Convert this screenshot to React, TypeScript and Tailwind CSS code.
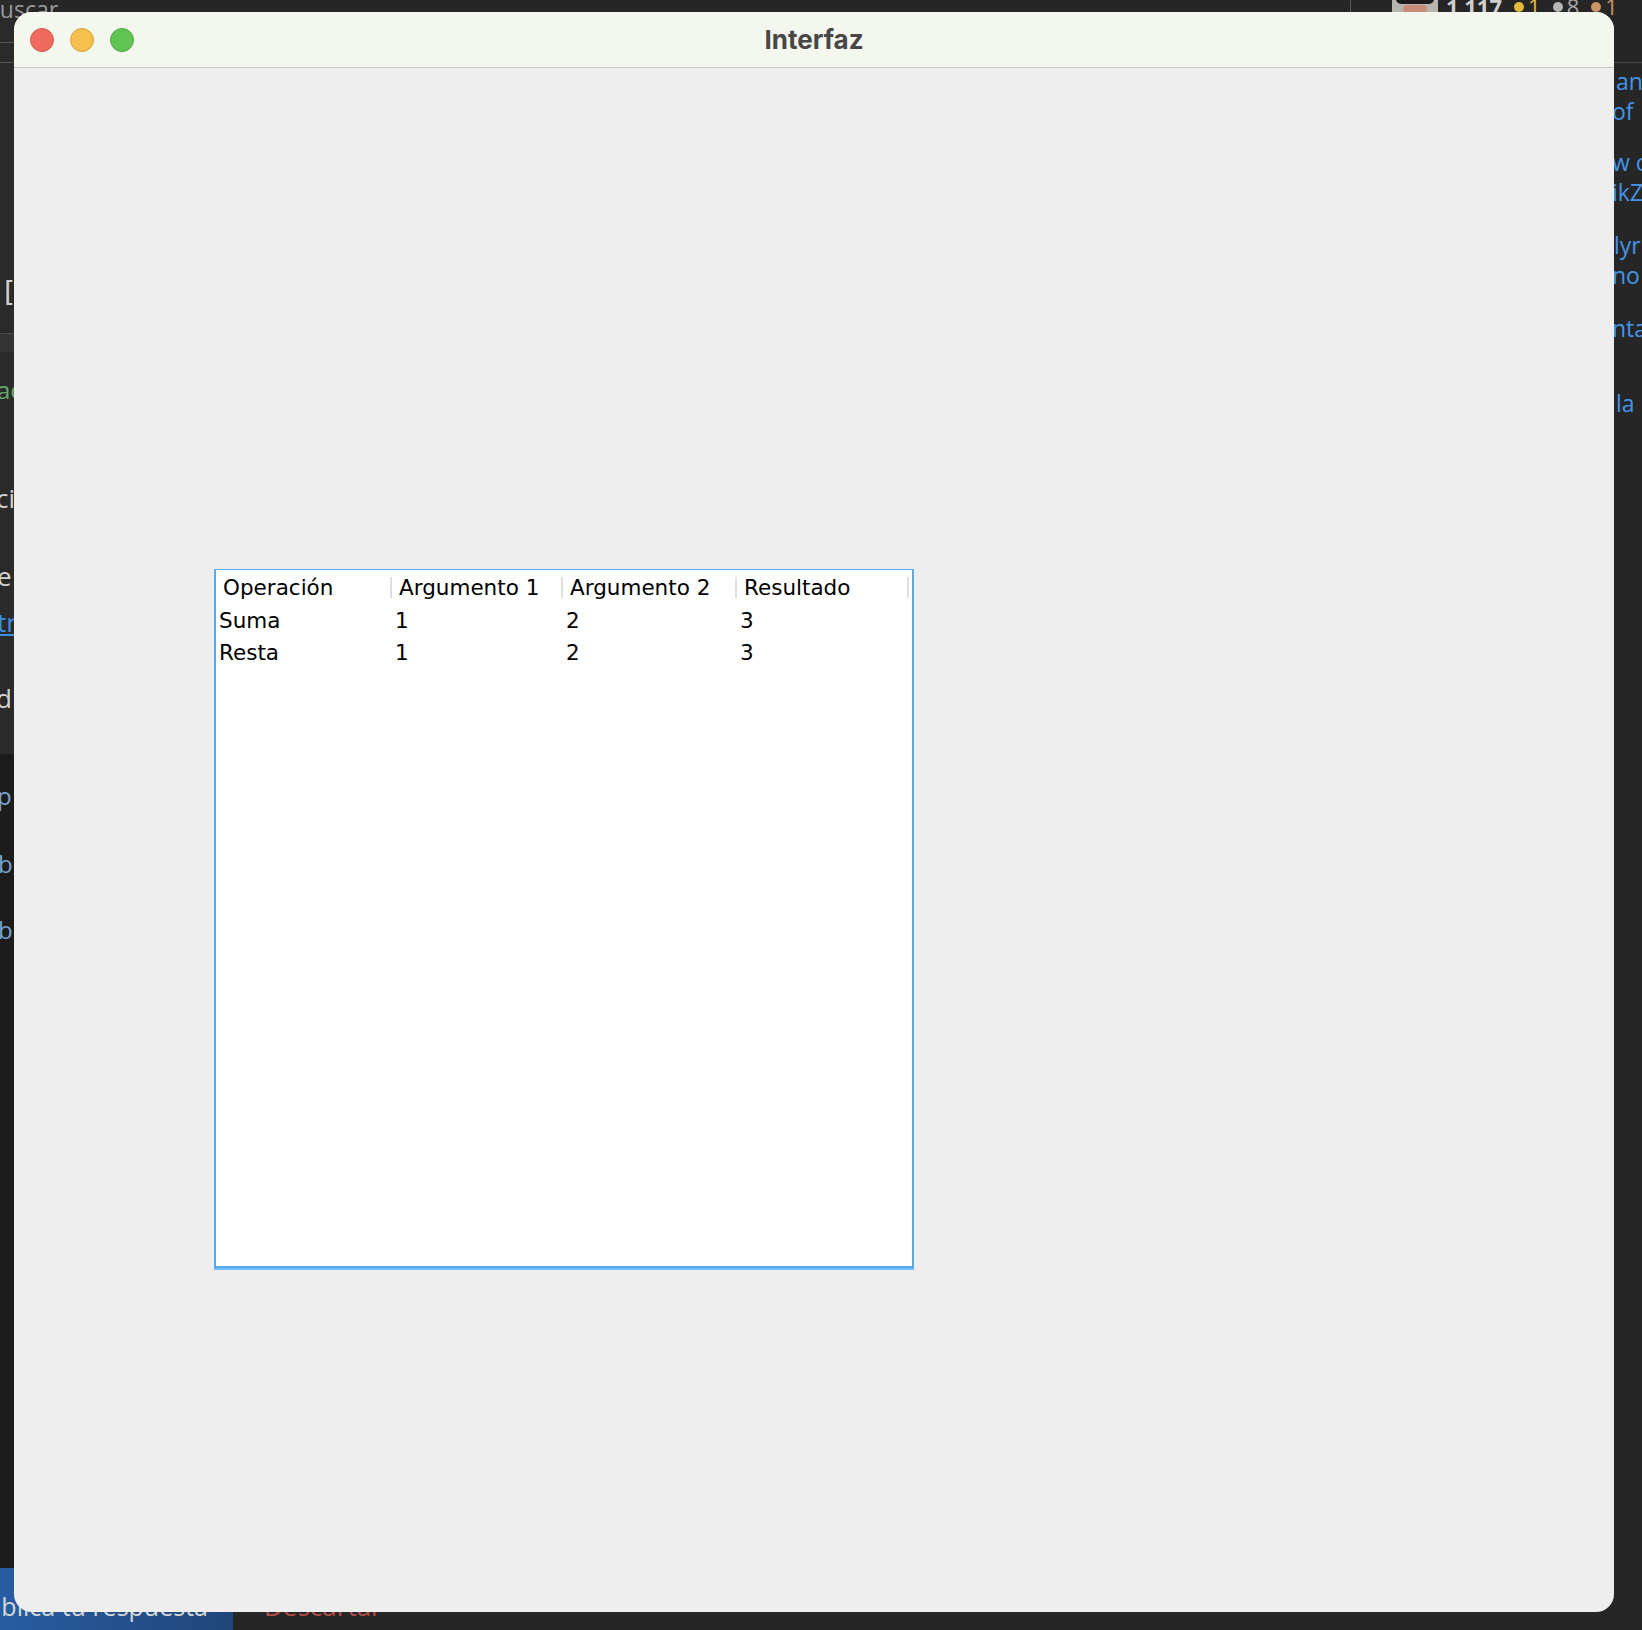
import React from "react";

const columns = ["Operación", "Argumento 1", "Argumento 2", "Resultado"];

const rows = [
  ["Suma", "1", "2", "3"],
  ["Resta", "1", "2", "3"],
];

function TrafficLights() {
  return (
    <div className="flex items-center gap-4 pl-4">
      <span className="block h-6 w-6 rounded-full border border-[#d5574e] bg-[#ee6a5f]" />
      <span className="block h-6 w-6 rounded-full border border-[#d9a33f] bg-[#f5bf4f]" />
      <span className="block h-6 w-6 rounded-full border border-[#4fa844] bg-[#61c554]" />
    </div>
  );
}

function ResultsTable() {
  return (
    <div className="w-[700px] h-[699px] bg-white border-l-2 border-r-2 border-t border-b-2 border-[#5aa8ec] shadow-[0_2px_0_#72bdf8] font-['DejaVu_Sans',sans-serif] text-[21.5px] text-black">
      {/* Header */}
      <div className="grid grid-cols-[176px_171px_174px_172px] h-[35px]">
        {columns.map((c) => (
          <div key={c} className="flex items-center justify-between pl-[7px]">
            <span className="leading-none whitespace-nowrap">{c}</span>
            <span className="block h-[21px] w-[2px] bg-[#e0e0e0]" />
          </div>
        ))}
      </div>

      {/* Rows */}
      {rows.map((r, i) => (
        <div key={i} className="grid grid-cols-[176px_171px_174px_172px] h-[32px] leading-[32px]">
          {r.map((v, j) => (
            <div key={j} className="pl-[3px] whitespace-nowrap">
              {v}
            </div>
          ))}
        </div>
      ))}
    </div>
  );
}

function Backdrop() {
  return (
    <>
      {/* left strip */}
      <div className="absolute left-0 top-0 w-[20px] h-[754px] bg-[#2a2a2a]" />
      <div className="absolute left-0 top-[754px] w-[20px] h-[814px] bg-[#1c1c1c]" />
      <div className="absolute left-0 top-[42px] w-[20px] h-px bg-[#555]" />
      <div className="absolute left-0 top-[62px] w-[20px] h-px bg-[#555]" />
      <div className="absolute left-0 top-[333px] w-[20px] h-px bg-[#4a4a4a]" />
      <div className="absolute left-0 top-[334px] w-[20px] h-[18px] bg-[#333]" />

      <span className="absolute -left-[15px] -top-[8px] text-[23px] text-[#9a9a9a] font-['Open_Sans',sans-serif]">
        Buscar
      </span>
      <span className="absolute left-[4px] top-[276px] text-[28px] leading-[34px] text-[#cfcfcf] font-['DejaVu_Sans',sans-serif]">
        [
      </span>
      <span className="absolute -left-[3px] top-[374px] text-[24px] leading-[32px] text-[#6aa86a] font-['Open_Sans',sans-serif]">
        ac
      </span>
      <span className="absolute -left-[4px] top-[482px] text-[26px] leading-[32px] text-[#d4d4d4] font-['Open_Sans',sans-serif]">
        ci
      </span>
      <span className="absolute -left-[3px] top-[560px] text-[26px] leading-[32px] text-[#d4d4d4] font-['Open_Sans',sans-serif]">
        e
      </span>
      <span className="absolute -left-[3px] top-[606px] text-[26px] leading-[32px] text-[#3b8fe5] underline font-['Open_Sans',sans-serif]">
        tr
      </span>
      <span className="absolute -left-[4px] top-[682px] text-[26px] leading-[32px] text-[#d4d4d4] font-['Open_Sans',sans-serif]">
        di
      </span>
      <span className="absolute -left-[3px] top-[780px] text-[24px] leading-[32px] text-[#79a3cf] font-['Open_Sans',sans-serif]">
        p
      </span>
      <span className="absolute -left-[2px] top-[848px] text-[24px] leading-[32px] text-[#79a3cf] font-['Open_Sans',sans-serif]">
        b
      </span>
      <span className="absolute -left-[2px] top-[914px] text-[24px] leading-[32px] text-[#79a3cf] font-['Open_Sans',sans-serif]">
        b
      </span>

      {/* top right strip */}
      <div className="absolute left-[1350px] top-0 w-px h-[12px] bg-[#555]" />
      <div className="absolute left-[1392px] -top-[20px] w-[46px] h-[34px] bg-[#b8b4ae] overflow-hidden">
        <div className="mx-auto mt-[14px] h-[10px] w-[38px] rounded-full bg-[#1d1d1d]" />
        <div className="mx-auto mt-[1px] h-[8px] w-[24px] rounded-full bg-[#c98c78]" />
      </div>
      <div className="absolute left-[1446px] -top-[10px] flex items-center gap-3 text-[22px] font-bold text-[#cfcfcf] font-['Open_Sans',sans-serif]">
        <span>1 117</span>
        <span className="flex items-center gap-1 text-[#e5b93a] font-normal">
          <span className="block h-[10px] w-[10px] rounded-full bg-[#e5b93a]" />1
        </span>
        <span className="flex items-center gap-1 text-[#a8a8a8] font-normal">
          <span className="block h-[10px] w-[10px] rounded-full bg-[#b5b5b5]" />8
        </span>
        <span className="flex items-center gap-1 text-[#c99564] font-normal">
          <span className="block h-[10px] w-[10px] rounded-full bg-[#c99564]" />1
        </span>
      </div>
      <div className="absolute left-[1610px] top-[62px] w-[32px] h-px bg-[#4a4a4a]" />

      {/* right strip text */}
      <div className="absolute left-[1612px] top-[66px] flex flex-col text-[23px] leading-[30px] text-[#4495e8] font-['Open_Sans',sans-serif] whitespace-nowrap">
        <span className="pl-[4px]">an</span>
        <span>of</span>
        <span className="mt-[21px]">w c</span>
        <span>ikZ</span>
        <span className="mt-[23px] pl-[2px]">lyr</span>
        <span>no</span>
        <span className="mt-[23px]">nta</span>
        <span className="mt-[45px] pl-[4px]">la</span>
      </div>

      {/* bottom strip */}
      <div className="absolute left-0 top-[1568px] w-[233px] h-[62px] bg-gradient-to-r from-[#285da3] to-[#1f4678] overflow-hidden">
        <span className="absolute -left-[29px] top-[26px] text-[25px] leading-none text-[#d8d8d8] whitespace-nowrap font-['Open_Sans',sans-serif]">
          Publica tu respuesta
        </span>
      </div>
      <span className="absolute left-[264px] top-[1593px] text-[26px] leading-none text-[#b24c47] font-['Open_Sans',sans-serif]">
        Descartar
      </span>
    </>
  );
}

export default function App() {
  return (
    <div className="relative w-[1642px] h-[1630px] overflow-hidden bg-[#262626]">
      <Backdrop />

      {/* Window */}
      <div className="absolute left-[14px] top-[12px] w-[1600px] h-[1600px] rounded-[18px] overflow-hidden bg-[#eeeeee] flex flex-col">
        {/* Title bar */}
        <div className="relative h-[56px] bg-[#f4f7ee] border-b border-[#c8c8c8] flex items-center">
          <TrafficLights />
          <div className="absolute inset-0 flex items-center justify-center">
            <span className="text-[26px] font-bold text-[#474747] font-['Inter',sans-serif]">
              Interfaz
            </span>
          </div>
        </div>

        {/* Content */}
        <div className="flex-1 pl-[200px] pt-[501px]">
          <ResultsTable />
        </div>
      </div>
    </div>
  );
}
